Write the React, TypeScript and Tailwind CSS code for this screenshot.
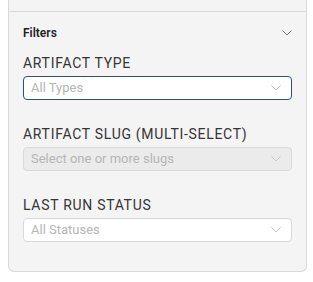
import React from "react";

function Chevron({ className }: { className?: string }) {
  return (
    <svg width="10" height="6" viewBox="0 0 10 6" className={className} fill="none">
      <path d="M0.5 0.5 L5 5 L9.5 0.5" stroke="currentColor" strokeWidth="1" />
    </svg>
  );
}

function SelectBox({
  placeholder,
  focused,
  disabled,
}: {
  placeholder: string;
  focused?: boolean;
  disabled?: boolean;
}) {
  const base =
    "flex h-6 items-center justify-between rounded-[4px] border pl-[7px] pr-[10px]";
  const variant = focused
    ? "border-[#2f4e7e] bg-white"
    : disabled
    ? "border-[#d9d9d9] bg-[#ebebeb]"
    : "border-[#d9d9d9] bg-white";
  return (
    <div className={`${base} ${variant}`}>
      <span className="text-[13px] leading-4 text-[#b5b5b5]">{placeholder}</span>
      <Chevron className="text-[#c6c6c6]" />
    </div>
  );
}

function Field({
  label,
  placeholder,
  focused,
  disabled,
}: {
  label: string;
  placeholder: string;
  focused?: boolean;
  disabled?: boolean;
}) {
  return (
    <div className="flex flex-col">
      <div className="mb-[3px] text-[14px] leading-5 tracking-[0.05em] text-[#353535]">
        {label}
      </div>
      <SelectBox placeholder={placeholder} focused={focused} disabled={disabled} />
    </div>
  );
}

export default function App() {
  return (
    <div
      className="min-h-[282px] bg-white"
      style={{ fontFamily: "Roboto, 'Liberation Sans', sans-serif" }}
    >
      <div className="ml-2 w-[299px] rounded-b-md border-x border-b border-[#d9d9d9] bg-[#f4f4f4]">
        <div className="h-[11px]" />
        <div className="border-t border-[#d9d9d9] px-[14px] pb-[29px] pt-[13px]">
          <div className="flex items-center justify-between">
            <span className="text-[12px] font-semibold leading-4 text-[#1f1f1f]">Filters</span>
            <Chevron className="text-[#777777]" />
          </div>
          <div className="mt-3 flex flex-col gap-6">
            <Field label="ARTIFACT TYPE" placeholder="All Types" focused />
            <Field
              label="ARTIFACT SLUG (MULTI-SELECT)"
              placeholder="Select one or more slugs"
              disabled
            />
            <Field label="LAST RUN STATUS" placeholder="All Statuses" />
          </div>
        </div>
      </div>
    </div>
  );
}
